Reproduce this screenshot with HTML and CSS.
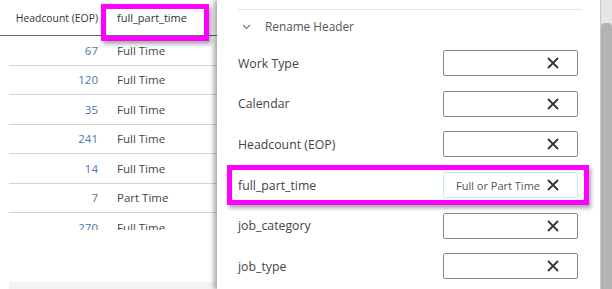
FILE: index.html
```html
<!DOCTYPE html>
<html>
<head>
<meta charset="utf-8">
<link rel="stylesheet" href="styles.css">
</head>
<body>
<div class="app">
  <div class="table">
    <div class="thead">
      <div class="c-num">Headcount (EOP)</div>
      <div class="c-txt">full_part_time</div>
      <div class="hl hl-head"></div>
    </div>
    <div class="tbody">
      <div class="row"><div class="c-num num">67</div><div class="c-txt">Full Time</div></div>
      <div class="row"><div class="c-num num">120</div><div class="c-txt">Full Time</div></div>
      <div class="row"><div class="c-num num">35</div><div class="c-txt">Full Time</div></div>
      <div class="row"><div class="c-num num">241</div><div class="c-txt">Full Time</div></div>
      <div class="row"><div class="c-num num">14</div><div class="c-txt">Full Time</div></div>
      <div class="row"><div class="c-num num">7</div><div class="c-txt">Part Time</div></div>
      <div class="row last"><div class="c-num num">270</div><div class="c-txt">Full Time</div></div>
    </div>
    <div class="tfoot"></div>
  </div>
  <div class="panel">
    <div class="panel-inner">
      <div class="section-head">
        <svg class="chev" width="9" height="6" viewBox="0 0 9 6"><path d="M1 1 L4.5 4.5 L8 1" fill="none" stroke="#777" stroke-width="1.1"/></svg>
        <span>Rename Header</span>
      </div>
      <div class="frow"><span class="lbl">Work Type</span><div class="inp"><span class="val"></span><svg class="x" viewBox="0 0 12 12"><path d="M1 1L11 11M11 1L1 11" stroke="#333" stroke-width="1.8"/></svg></div></div>
      <div class="frow"><span class="lbl">Calendar</span><div class="inp"><span class="val"></span><svg class="x" viewBox="0 0 12 12"><path d="M1 1L11 11M11 1L1 11" stroke="#333" stroke-width="1.8"/></svg></div></div>
      <div class="frow"><span class="lbl">Headcount (EOP)</span><div class="inp"><span class="val"></span><svg class="x" viewBox="0 0 12 12"><path d="M1 1L11 11M11 1L1 11" stroke="#333" stroke-width="1.8"/></svg></div></div>
      <div class="frow focus"><span class="lbl">full_part_time</span><div class="inp focused"><span class="val">Full or Part Time</span><svg class="x" viewBox="0 0 12 12"><path d="M1 1L11 11M11 1L1 11" stroke="#333" stroke-width="1.8"/></svg></div><div class="hl hl-row"></div></div>
      <div class="frow"><span class="lbl">job_category</span><div class="inp"><span class="val"></span><svg class="x" viewBox="0 0 12 12"><path d="M1 1L11 11M11 1L1 11" stroke="#333" stroke-width="1.8"/></svg></div></div>
      <div class="frow"><span class="lbl">job_type</span><div class="inp"><span class="val"></span><svg class="x" viewBox="0 0 12 12"><path d="M1 1L11 11M11 1L1 11" stroke="#333" stroke-width="1.8"/></svg></div></div>
      <div class="bottom-line"></div>
    </div>
  </div>
  <div class="scrollbar"><div class="thumb"></div></div>
</div>
</body>
</html>
```
FILE: styles.css
```css
html, body {
  margin: 0;
  padding: 0;
  width: 612px;
  height: 289px;
  overflow: hidden;
  background: #fff;
  font-family: "Open Sans", "Noto Sans", sans-serif;
  font-size: 11.5px;
  color: #444;
}
.app {
  display: flex;
  height: 289px;
}
.table {
  width: 217px;
  flex: none;
  display: flex;
  flex-direction: column;
  padding-left: 9px;
  box-sizing: border-box;
}
.thead {
  position: relative;
  height: 36px;
  border-bottom: 1px solid #666;
  display: flex;
  align-items: center;
  color: #333;
  box-sizing: border-box;
  margin-left: -9px;
  padding-left: 9px;
  white-space: nowrap;
  font-size: 10.4px;
}
.thead .c-txt {
  font-size: 11px;
}
.c-num {
  width: 89px;
  text-align: right;
  flex: none;
  white-space: nowrap;
}
.c-txt {
  padding-left: 19px;
  white-space: nowrap;
}
.tbody {
  height: 194px;
  overflow: hidden;
}
.row {
  height: 29.5px;
  box-sizing: border-box;
  border-bottom: 1px solid #d4d4d4;
  display: flex;
  align-items: center;
}
.num { color: #4a78b0; }
.tfoot {
  margin-top: auto;
  height: 7px;
  background: #f3f3f3;
}
.hl {
  position: absolute;
  border: 5px solid #ff00ff;
  box-shadow: 2px 3px 4px rgba(0,0,0,0.35);
  box-sizing: border-box;
  pointer-events: none;
}
.hl-head {
  left: 101px;
  top: 4px;
  width: 108px;
  height: 37px;
}
.panel {
  flex: 1;
  position: relative;
  box-shadow: -3px 0 5px rgba(0,0,0,0.35);
  background: #fff;
  padding: 9px 18px 0 21px;
  z-index: 1;
}
.panel-inner {
  border-top: 1.5px solid #c9eef7;
}
.section-head {
  height: 34px;
  display: flex;
  align-items: center;
  color: #555;
  font-size: 11.8px;
  padding-left: 4px;
  margin-top: -1px;
}
.chev { margin-right: 14px; margin-top: 1px; }
.frow {
  position: relative;
  height: 40.6px;
  display: flex;
  align-items: center;
  justify-content: space-between;
  font-size: 12.3px;
  color: #444;
}
.inp {
  width: 135px;
  height: 26px;
  box-sizing: border-box;
  border: 1px solid #8a8a8a;
  border-radius: 2px;
  display: flex;
  align-items: center;
  justify-content: flex-end;
  padding-right: 18px;
  margin-right: 4px;
}
.inp.focused {
  border-color: #bfe9f5;
  justify-content: space-between;
  padding-left: 12px;
}
.val {
  font-size: 11px;
  color: #555;
}
.x { width: 12px; height: 12px; }
.hl-row {
  left: -11px;
  right: -7px;
  top: 0px;
  height: 40px;
}
.bottom-line {
  border-top: 1.5px solid #c9eef7;
  margin-top: 2px;
}
.scrollbar {
  width: 11px;
  flex: none;
  background: #e6e6e6;
  border-left: 1px solid #d0d0d0;
  position: relative;
}
.thumb {
  margin-top: 23px;
  height: 266px;
  background: #b3b3b3;
  border-radius: 4px 4px 0 0;
}
```
